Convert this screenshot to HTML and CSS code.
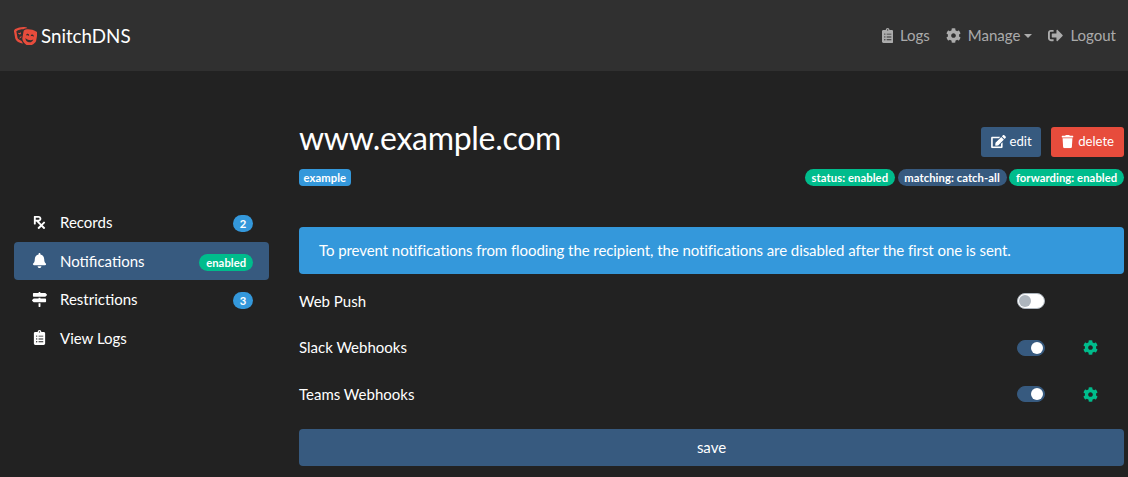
FILE: index.html
```html
<!DOCTYPE html>
<html lang="en">
<head>
<meta charset="utf-8">
<title>SnitchDNS</title>
<link rel="stylesheet" href="styles.css">
</head>
<body>
<svg class="sprite" aria-hidden="true">
<symbol id="masks" viewBox="0 0 640 512"><path d="M206.86 245.15c-35.88 10.45-59.95 41.2-57.53 74.1 11.4-12.72 28.81-23.7 49.9-30.92l7.63-43.18zM95.81 295L64.08 115.49c-.29-1.62.28-2.62.24-2.65 57.76-32.06 123.12-49.01 189.01-49.01 1.61 0 3.23.17 4.85.19 13.95-13.47 31.73-22.83 51.59-26 18.89-3.02 38.05-4.55 57.18-5.32-9.99-13.95-24.48-24.23-41.77-27C301.27 1.89 277.24 0 253.32 0 176.66 0 101.02 19.42 33.2 57.06 9.03 70.48-3.92 98.48 1.05 126.58l31.73 179.51c14.23 80.52 136.33 142.08 204.45 142.08 3.59 0 6.75-.46 10.01-.8-13.52-17.08-28.94-40.48-39.5-67.58-47.61-12.98-106.06-51.62-111.93-84.79zm97.55-137.46c-.73-4.12-2.23-7.87-4.07-11.4-8.25 8.91-20.67 15.75-35.32 18.32-14.65 2.58-28.67.4-39.48-5.17-.52 3.94-.64 7.98.09 12.1 3.84 21.7 24.58 36.19 46.34 32.37 21.75-3.82 36.28-24.52 32.44-46.22zM606.8 120.9c-88.98-49.38-191.43-67.41-291.98-51.35-27.31 4.36-49.08 26.26-54.04 54.36l-31.73 179.51c-15.39 87.05 95.28 196.27 158.31 207.35 63.03 11.09 204.47-53.79 219.86-140.84l31.73-179.51c4.97-28.11-7.98-56.11-32.15-69.52zm-273.24 96.8c3.84-21.7 24.58-36.19 46.34-32.36 21.76 3.83 36.28 24.52 32.45 46.22-.73 4.12-2.23 7.87-4.07 11.4-8.25-8.91-20.67-15.75-35.32-18.32-14.65-2.58-28.67-.4-39.48 5.17-.53-3.95-.65-7.99.08-12.11zm70.47 198.76c-55.68-9.79-93.52-59.27-89.04-112.9 20.6 25.54 56.21 46.17 99.49 53.78 43.28 7.61 83.82.37 111.93-16.6-14.18 51.94-66.71 85.51-122.38 75.72zm130.3-151.34c-8.25-8.91-20.68-15.75-35.33-18.32-14.65-2.58-28.67-.4-39.48 5.17-.52-3.94-.64-7.98.09-12.1 3.84-21.7 24.58-36.19 46.34-32.37 21.75 3.83 36.28 24.52 32.45 46.22-.73 4.13-2.23 7.88-4.07 11.4z"/></symbol>
<symbol id="cog" viewBox="0 0 512 512"><path d="M487.4 315.7l-42.6-24.6c4.3-23.2 4.3-47 0-70.2l42.6-24.6c4.9-2.8 7.1-8.6 5.5-14-11.1-35.6-30-67.8-54.7-94.6-3.8-4.1-10-5.1-14.8-2.3L380.8 110c-17.9-15.4-38.5-27.3-60.8-35.1V25.8c0-5.6-3.9-10.5-9.4-11.7-36.7-8.2-74.3-7.8-109.2 0-5.5 1.2-9.4 6.1-9.4 11.7V75c-22.2 7.9-42.8 19.8-60.8 35.1L88.7 85.5c-4.9-2.8-11-1.9-14.8 2.3-24.7 26.7-43.6 58.9-54.7 94.6-1.7 5.4.6 11.2 5.5 14L67.3 221c-4.3 23.2-4.3 47 0 70.2l-42.6 24.6c-4.9 2.8-7.1 8.6-5.5 14 11.1 35.6 30 67.8 54.7 94.6 3.8 4.1 10 5.1 14.8 2.3l42.6-24.6c17.9 15.4 38.5 27.3 60.8 35.1v49.2c0 5.6 3.9 10.5 9.4 11.7 36.7 8.2 74.3 7.8 109.2 0 5.5-1.2 9.4-6.1 9.4-11.7v-49.2c22.2-7.9 42.8-19.8 60.8-35.1l42.6 24.6c4.9 2.8 11 1.9 14.8-2.3 24.7-26.7 43.6-58.9 54.7-94.6 1.5-5.5-.7-11.3-5.6-14.1zM256 336c-44.1 0-80-35.9-80-80s35.9-80 80-80 80 35.9 80 80-35.9 80-80 80z"/></symbol>
<symbol id="clipboard" viewBox="0 0 384 512"><path d="M336 64h-80c0-35.3-28.7-64-64-64s-64 28.7-64 64H48C21.5 64 0 85.5 0 112v352c0 26.5 21.5 48 48 48h288c26.5 0 48-21.5 48-48V112c0-26.5-21.5-48-48-48zM96 424c-13.3 0-24-10.7-24-24s10.7-24 24-24 24 10.7 24 24-10.7 24-24 24zm0-96c-13.3 0-24-10.7-24-24s10.7-24 24-24 24 10.7 24 24-10.7 24-24 24zm0-96c-13.3 0-24-10.7-24-24s10.7-24 24-24 24 10.7 24 24-10.7 24-24 24zm96-192c13.3 0 24 10.7 24 24s-10.7 24-24 24-24-10.7-24-24 10.7-24 24-24zm128 368c0 4.4-3.6 8-8 8H168c-4.4 0-8-3.6-8-8v-16c0-4.4 3.6-8 8-8h144c4.4 0 8 3.6 8 8v16zm0-96c0 4.4-3.6 8-8 8H168c-4.4 0-8-3.6-8-8v-16c0-4.4 3.6-8 8-8h144c4.4 0 8 3.6 8 8v16zm0-96c0 4.4-3.6 8-8 8H168c-4.4 0-8-3.6-8-8v-16c0-4.4 3.6-8 8-8h144c4.4 0 8 3.6 8 8v16z"/></symbol>
<symbol id="signout" viewBox="0 0 512 512"><path d="M497 273L329 441c-15 15-41 4.5-41-17v-96H152c-13.3 0-24-10.7-24-24v-96c0-13.3 10.7-24 24-24h136V88c0-21.4 25.9-32 41-17l168 168c9.3 9.4 9.3 24.6 0 34zM192 436v-40c0-6.6-5.4-12-12-12H96c-17.7 0-32-14.3-32-32V160c0-17.7 14.3-32 32-32h84c6.6 0 12-5.4 12-12V76c0-6.6-5.4-12-12-12H96c-53 0-96 43-96 96v192c0 53 43 96 96 96h84c6.6 0 12-5.4 12-12z"/></symbol>
<symbol id="bell" viewBox="0 0 448 512"><path d="M224 512c35.32 0 63.97-28.65 63.97-64H160.03c0 35.35 28.65 64 63.97 64zm215.39-149.71c-19.32-20.76-55.47-51.99-55.47-154.29 0-77.7-54.48-139.9-127.94-155.16V32c0-17.67-14.32-32-31.98-32s-31.98 14.33-31.98 32v20.84C118.56 68.1 64.08 130.3 64.08 208c0 102.3-36.15 133.53-55.47 154.29-6 6.45-8.66 14.16-8.61 21.71.11 16.4 12.98 32 32.1 32h383.8c19.12 0 32-15.6 32.1-32 .05-7.55-2.61-15.27-8.61-21.71z"/></symbol>
<symbol id="signs" viewBox="0 0 512 512"><path d="M507.31 84.69L464 41.37c-6-6-14.14-9.37-22.63-9.37H288V16c0-8.84-7.16-16-16-16h-32c-8.84 0-16 7.16-16 16v16H56c-13.25 0-24 10.75-24 24v80c0 13.25 10.75 24 24 24h385.37c8.49 0 16.62-3.37 22.63-9.37l43.31-43.31c6.25-6.26 6.25-16.38 0-22.63zM224 496c0 8.84 7.16 16 16 16h32c8.84 0 16-7.16 16-16V384h-64v112zm232-272H288v-32h-64v32H70.63c-8.49 0-16.62 3.37-22.63 9.37L4.69 276.69c-6.25 6.25-6.25 16.38 0 22.63L48 342.63c6 6 14.14 9.37 22.63 9.37H456c13.25 0 24-10.75 24-24v-80c0-13.25-10.75-24-24-24z"/></symbol>
<symbol id="prescription" viewBox="0 0 384 512"><path d="M301.26 352l78.06-78.06c6.25-6.25 6.25-16.38 0-22.63l-22.63-22.63c-6.25-6.25-16.38-6.25-22.63 0L256 306.74l-83.96-83.96C219.31 216.8 256 176.89 256 128c0-53.02-42.98-96-96-96H16C7.16 32 0 39.16 0 48v256c0 8.84 7.16 16 16 16h32c8.84 0 16-7.16 16-16v-80h18.75l128 128-78.06 78.06c-6.25 6.25-6.25 16.38 0 22.63l22.63 22.63c6.25 6.25 16.38 6.25 22.63 0L256 397.25l78.06 78.06c6.25 6.25 16.38 6.25 22.63 0l22.63-22.63c6.25-6.25 6.25-16.38 0-22.63L301.26 352zM64 96h96c17.64 0 32 14.36 32 32s-14.36 32-32 32H64V96z"/></symbol>
<symbol id="pen" viewBox="0 0 576 512"><path d="M402.6 83.2l90.2 90.2c3.8 3.8 3.8 10 0 13.8L274.4 405.6l-92.8 10.3c-12.4 1.4-22.9-9.1-21.5-21.5l10.3-92.8L388.8 83.2c3.8-3.8 10-3.8 13.8 0zm162-22.9l-48.8-48.8c-15.2-15.2-39.9-15.2-55.2 0l-35.4 35.4c-3.8 3.8-3.8 10 0 13.8l90.2 90.2c3.8 3.8 10 3.8 13.8 0l35.4-35.4c15.2-15.3 15.2-40 0-55.2zM384 346.2V448H64V128h229.8c3.2 0 6.2-1.3 8.5-3.5l40-40c7.6-7.6 2.2-20.5-8.5-20.5H48C21.5 64 0 85.5 0 112v352c0 26.5 21.5 48 48 48h352c26.5 0 48-21.5 48-48V306.2c0-10.7-12.9-16-20.5-8.5l-40 40c-2.2 2.3-3.5 5.3-3.5 8.5z"/></symbol>
<symbol id="trash" viewBox="0 0 448 512"><path d="M432 32H312l-9.4-18.7A24 24 0 0 0 281.1 0H166.8a23.72 23.72 0 0 0-21.4 13.3L136 32H16A16 16 0 0 0 0 48v32a16 16 0 0 0 16 16h416a16 16 0 0 0 16-16V48a16 16 0 0 0-16-16zM53.2 467a48 48 0 0 0 47.9 45h245.8a48 48 0 0 0 47.9-45L416 128H32z"/></symbol>
</svg>
<header class="navbar">
  <a class="brand"><svg class="brand-icon"><use href="#masks"/></svg><span>SnitchDNS</span></a>
  <nav class="top-links">
    <a class="top-link"><svg class="ico narrow"><use href="#clipboard"/></svg><span>Logs</span></a>
    <a class="top-link manage"><svg class="ico"><use href="#cog"/></svg><span>Manage</span><i class="caret"></i></a>
    <a class="top-link logout"><svg class="ico"><use href="#signout"/></svg><span>Logout</span></a>
  </nav>
</header>
<div class="page">
  <aside class="sidebar">
    <a class="side-link"><svg class="side-icon"><use href="#prescription"/></svg><span>Records</span><b class="badge pill info">2</b></a>
    <a class="side-link active"><svg class="side-icon"><use href="#bell"/></svg><span>Notifications</span><b class="badge pill success">enabled</b></a>
    <a class="side-link"><svg class="side-icon"><use href="#signs"/></svg><span>Restrictions</span><b class="badge pill info">3</b></a>
    <a class="side-link"><svg class="side-icon"><use href="#clipboard"/></svg><span>View Logs</span></a>
  </aside>
  <main class="content">
    <div class="title-row">
      <h1 class="title">www.example.com</h1>
      <div class="actions">
        <button class="btn small primary"><svg class="edit-icon"><use href="#pen"/></svg>edit</button>
        <button class="btn small danger"><svg class="trash-icon"><use href="#trash"/></svg>delete</button>
      </div>
    </div>
    <div class="badge-row">
      <b class="badge info">example</b>
      <div class="statuses">
        <b class="badge pill success">status: enabled</b>
        <b class="badge pill primary">matching: catch-all</b>
        <b class="badge pill success">forwarding: enabled</b>
      </div>
    </div>
    <div class="alert">To prevent notifications from flooding the recipient, the notifications are disabled after the first one is sent.</div>
    <div class="options">
      <div class="option"><span>Web Push</span><i class="switch"></i></div>
      <div class="option"><span>Slack Webhooks</span><i class="switch on"></i><svg class="gear"><use href="#cog"/></svg></div>
      <div class="option"><span>Teams Webhooks</span><i class="switch on"></i><svg class="gear"><use href="#cog"/></svg></div>
    </div>
    <button class="btn primary save">save</button>
  </main>
</div>
</body>
</html>
```
FILE: styles.css
```css
* { box-sizing: border-box; }
body {
  margin: 0;
  height: 477px;
  overflow: hidden;
  background: #222;
  color: #fff;
  font: 400 15px/1.5 Lato, sans-serif;
}
svg { fill: currentColor; flex: none; }
.sprite { display: none; }

.navbar {
  display: flex;
  align-items: center;
  justify-content: space-between;
  height: 71px;
  padding: 0 12px 0 14px;
  background: #303030;
}
.brand { display: flex; align-items: center; gap: 3.6px; padding-top: 1px; font-size: 18.75px; }
.brand-icon { width: 23.4px; height: 18.75px; color: #e74c3c; }
.top-links { display: flex; gap: 16px; color: rgba(255, 255, 255, .6); }
.top-link { display: flex; align-items: center; gap: 7px; }
.ico { width: 15px; height: 15px; }
.narrow { width: 11.25px; }
.caret {
  margin-left: -3px;
  border: 4.5px solid transparent;
  border-top-color: currentColor;
  border-bottom: 0;
}

.page { display: grid; grid-template-columns: 255px 825px; gap: 30px; padding-left: 14px; }
.sidebar { padding-top: 132px; }
.side-link { display: flex; align-items: center; height: 38.5px; padding: 0 16px; border-radius: 4px; }
.side-link.active { background: #375a7f; }
.side-icon { width: 19px; height: 15px; margin-right: 11px; }
.side-link .badge { margin: 3px 0 0 auto; }

.badge {
  display: inline-block;
  padding: 2.8px 4.5px;
  border-radius: 4px;
  font-size: 11.25px;
  font-weight: 700;
  line-height: 1;
  letter-spacing: .07px;
  white-space: nowrap;
}
.pill { padding-left: 6.75px; padding-right: 6.75px; border-radius: 160px; }
.info { background: #3498db; }
.success { background: #00bc8c; }
.primary { background: #375a7f; }
.danger { background: #e74c3c; }

.content { padding-top: 48px; }
.title-row { display: flex; justify-content: space-between; height: 50px; }
.title { margin: 0; font-size: 32px; font-weight: 400; line-height: 38.4px; letter-spacing: -.3px; }
.actions { display: flex; gap: 10px; padding-top: 8px; }
.btn {
  display: flex;
  align-items: center;
  justify-content: center;
  padding: 0;
  border: 0;
  border-radius: 4px;
  color: #fff;
  font: inherit;
}
.btn.small { height: 30px; padding: 0 9.5px; border-radius: 3px; font-size: 13.125px; gap: 4px; }
.btn.danger { padding: 0 10px; }
.edit-icon { width: 15px; height: 13.125px; }
.trash-icon { width: 13px; height: 13.125px; }
.badge-row { display: flex; justify-content: space-between; height: 17px; }
.statuses { display: flex; gap: 2.6px; }
.alert { height: 47px; margin-top: 41px; padding: 12px 20px; border-radius: 4px; background: #3498db; letter-spacing: -.07px; }
.options { margin-top: 3.6px; }
.option { display: grid; grid-template-columns: 718px 66px 15px; align-items: center; height: 46.5px; }
.switch {
  display: flex;
  align-items: center;
  width: 28px;
  height: 16px;
  padding: 0 1px;
  border: 1px solid #adb5bd;
  border-radius: 8px;
  background: #fff;
}
.switch::before { content: ""; width: 12px; height: 12px; border-radius: 50%; background: #adb5bd; }
.switch.on { justify-content: flex-end; margin-top: .8px; border-color: #375a7f; background: #375a7f; }
.switch.on::before { background: #fff; }
.gear { width: 15px; height: 15px; margin-top: .8px; color: #00bc8c; }
.save { width: 100%; height: 37px; margin-top: 11.9px; }
```
